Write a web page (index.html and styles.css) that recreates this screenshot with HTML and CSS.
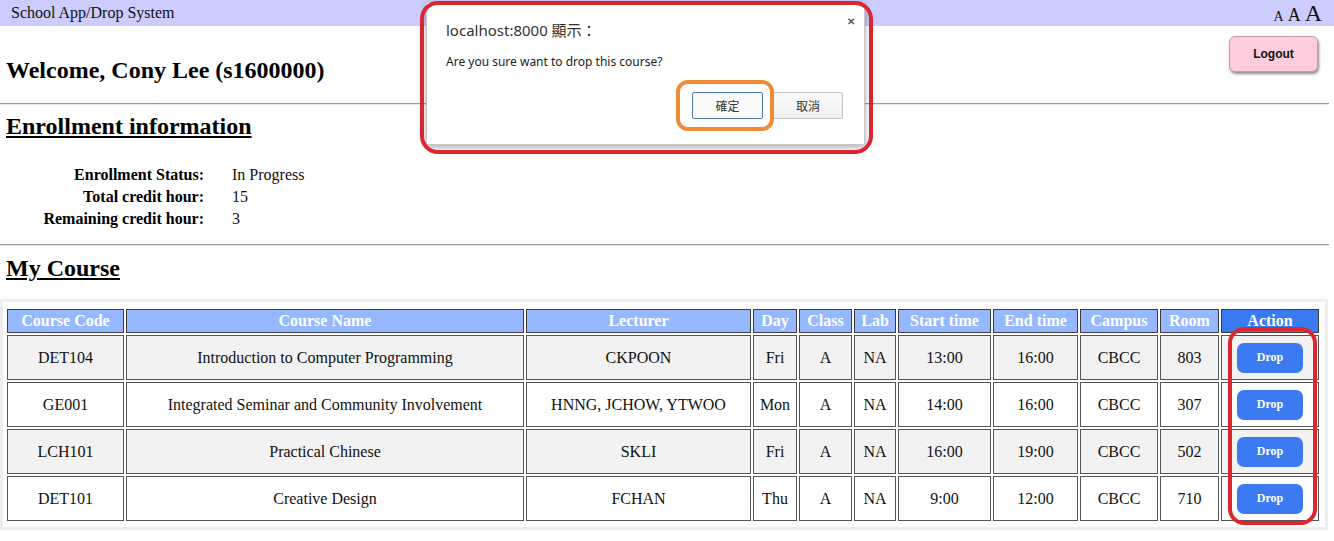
FILE: index.html
```html
<!DOCTYPE html>
<html lang="en">
<head>
<meta charset="utf-8">
<title>School App/Drop System</title>
<link rel="stylesheet" href="styles.css">
</head>
<body>
<div class="topbar">
  <span class="brand">School App/Drop System</span>
  <span class="sizes"><span class="a-s">A</span><span class="a-m">A</span><span class="a-l">A</span></span>
</div>
<div class="welcome-row">
  <h2 class="welcome">Welcome, Cony Lee (s1600000)</h2>
  <button class="logout">Logout</button>
</div>
<hr class="rule">
<h2 class="section-title">Enrollment information</h2>
<div class="info">
  <div class="label">Enrollment Status:</div><div class="value">In Progress</div>
  <div class="label">Total credit hour:</div><div class="value">15</div>
  <div class="label">Remaining credit hour:</div><div class="value">3</div>
</div>
<hr class="rule rule2">
<h2 class="section-title course-title">My Course</h2>
<div class="table-wrap">
  <table class="courses">
    <thead>
      <tr>
        <th class="c-code">Course Code</th>
        <th class="c-name">Course Name</th>
        <th class="c-lect">Lecturer</th>
        <th class="c-day">Day</th>
        <th class="c-class">Class</th>
        <th class="c-lab">Lab</th>
        <th class="c-start">Start time</th>
        <th class="c-end">End time</th>
        <th class="c-campus">Campus</th>
        <th class="c-room">Room</th>
        <th class="c-action">Action</th>
      </tr>
    </thead>
    <tbody>
      <tr class="odd">
        <td>DET104</td><td>Introduction to Computer Programming</td><td>CKPOON</td><td>Fri</td><td>A</td><td>NA</td><td>13:00</td><td>16:00</td><td>CBCC</td><td>803</td><td><button class="drop">Drop</button></td>
      </tr>
      <tr>
        <td>GE001</td><td>Integrated Seminar and Community Involvement</td><td>HNNG, JCHOW, YTWOO</td><td>Mon</td><td>A</td><td>NA</td><td>14:00</td><td>16:00</td><td>CBCC</td><td>307</td><td><button class="drop">Drop</button></td>
      </tr>
      <tr class="odd">
        <td>LCH101</td><td>Practical Chinese</td><td>SKLI</td><td>Fri</td><td>A</td><td>NA</td><td>16:00</td><td>19:00</td><td>CBCC</td><td>502</td><td><button class="drop">Drop</button></td>
      </tr>
      <tr>
        <td>DET101</td><td>Creative Design</td><td>FCHAN</td><td>Thu</td><td>A</td><td>NA</td><td>9:00</td><td>12:00</td><td>CBCC</td><td>710</td><td><button class="drop">Drop</button></td>
      </tr>
    </tbody>
  </table>
</div>

<div class="dialog">
  <span class="dlg-close">&#x2715;</span>
  <div class="dlg-title">localhost:8000 顯示：</div>
  <div class="dlg-msg">Are you sure want to drop this course?</div>
  <div class="dlg-buttons">
    <button class="dlg-btn dlg-ok">確定</button>
    <button class="dlg-btn">取消</button>
  </div>
</div>
<div class="ring ring-dialog"></div>
<div class="ring ring-ok"></div>
<div class="ring ring-action"></div>
</body>
</html>
```

FILE: styles.css
```css
* { box-sizing: border-box; }
html, body { margin: 0; padding: 0; background: #fff; }
body {
  font-family: "Liberation Serif", "Times New Roman", serif;
  color: #000;
  position: relative;
  width: 1334px;
  min-height: 541px;
  overflow: hidden;
}

.topbar {
  height: 26px;
  background: #ccccff;
  display: flex;
  align-items: center;
  justify-content: space-between;
  padding: 0 12px 0 11px;
  font-size: 16px;
}
.brand { line-height: 26px; color: #111; }
.sizes { display: flex; align-items: baseline; gap: 4px; color: #111; line-height: 1; }
.a-s { font-size: 14px; }
.a-m { font-size: 18px; }
.a-l { font-size: 24px; }

.welcome-row {
  display: flex;
  justify-content: space-between;
  align-items: flex-start;
  padding: 0 16px 0 6px;
  height: 77px;
}
.welcome {
  margin: 30px 0 0 0;
  font-size: 24px;
  line-height: 28px;
  font-weight: bold;
}
.logout {
  margin-top: 10px;
  width: 89px;
  height: 36px;
  background: #ffccdd;
  border: 1px solid #b9a3ab;
  border-radius: 6px;
  box-shadow: 1px 2px 3px #8a8a8a;
  font-family: "Liberation Sans", Arial, sans-serif;
  font-size: 12px;
  font-weight: bold;
  color: #111;
}

.rule {
  margin: 0 5px 0 0;
  border: 0;
  border-top: 1px solid #9a9a9a;
  border-bottom: 1px solid #e6e6e6;
  height: 2px;
}
.rule2 { margin-top: 14px; }

.section-title {
  margin: 7px 0 0 6px;
  font-size: 24px;
  line-height: 28px;
  font-weight: bold;
  text-decoration: underline;
  text-underline-offset: 2px;
}
.course-title { margin-top: 8px; }

.info {
  margin-top: 24px;
  display: grid;
  grid-template-columns: 204px auto;
  column-gap: 28px;
  grid-auto-rows: 22px;
  font-size: 16px;
  align-items: center;
}
.label { text-align: right; font-weight: bold; }
.value { color: #111; }

.table-wrap {
  margin: 17px 6px 0 0;
  border: 3px solid #eeeeee;
  padding: 5px 4px 4px 2px;
}
.courses {
  width: 1316px;
  table-layout: fixed;
  border-collapse: separate;
  border-spacing: 2px;
  font-size: 16px;
}
.courses th, .courses td {
  border: 1px solid #555;
  text-align: center;
  padding: 0;
  box-sizing: border-box;
}
.courses th {
  background: #96b8ff;
  color: #fff;
  font-weight: bold;
  height: 24px;
  line-height: 20px;
  border-color: #3c3c3c;
}
.courses th.c-action { background: #3a7af0; }
.courses td { height: 45px; background: #fff; color: #111; }
.courses tr.odd td { background: #f2f2f2; }

.c-code { width: 117px; }
.c-name { width: 398px; }
.c-lect { width: 225px; }
.c-day { width: 44px; }
.c-class { width: 53px; }
.c-lab { width: 42px; }
.c-start { width: 93px; }
.c-end { width: 85px; }
.c-campus { width: 78px; }
.c-room { width: 59px; }
.c-action { width: 98px; }

.drop {
  width: 66px;
  height: 30px;
  background: #3b7af0;
  color: #fff;
  border: 0;
  border-radius: 7px;
  font-family: "Liberation Serif", "Times New Roman", serif;
  font-weight: bold;
  font-size: 12px;
  margin: 0;
}

/* dialog overlay */
.dialog {
  position: absolute;
  left: 426px;
  top: 2px;
  width: 439px;
  height: 143px;
  background: #fff;
  border: 1px solid #c8c8c8;
  box-shadow: 0 2px 6px rgba(0,0,0,0.35);
  padding: 16px 21px 0 19px;
  font-family: "Noto Sans", "Noto Sans CJK TC", sans-serif;
  color: #222;
}
.dlg-close {
  position: absolute;
  right: 9px;
  top: 11px;
  font-size: 10px;
  font-weight: bold;
  color: #555;
}
.dlg-title { font-size: 15px; line-height: 22px; color: #333; }
.dlg-msg { margin-top: 12px; font-size: 12px; line-height: 18px; color: #222; }
.dlg-buttons {
  margin-top: 21px;
  display: flex;
  justify-content: flex-end;
  gap: 10px;
}
.dlg-btn {
  width: 70px;
  height: 27px;
  border: 1px solid #c4c4c4;
  background: linear-gradient(#fbfbfb, #f0f0f0);
  border-radius: 2px;
  font-family: "Noto Sans CJK TC", sans-serif;
  font-size: 12px;
  color: #333;
  padding: 0;
}
.dlg-ok { width: 71px; border-color: #4d7bb0; background: #fafafa; }

.ring {
  position: absolute;
  border-style: solid;
  pointer-events: none;
}
.ring-dialog {
  left: 420px;
  top: 1px;
  width: 453px;
  height: 153px;
  border-width: 4px;
  border-color: #dc2531;
  border-radius: 18px;
}
.ring-ok {
  left: 676px;
  top: 80px;
  width: 98px;
  height: 51px;
  border-width: 4px;
  border-color: #f28a35;
  border-radius: 12px;
}
.ring-action {
  left: 1228px;
  top: 327px;
  width: 89px;
  height: 198px;
  border-width: 4px;
  border-color: #dc2531;
  border-radius: 16px;
}
```
